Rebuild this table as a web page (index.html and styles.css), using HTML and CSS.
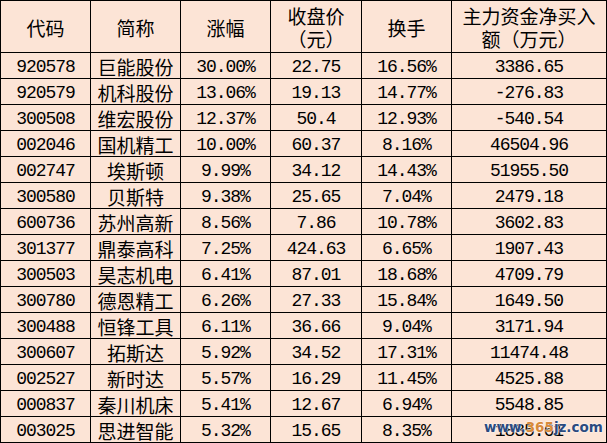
FILE: index.html
```html
<!DOCTYPE html>
<html lang="zh-CN">
<head>
<meta charset="utf-8">
<link rel="stylesheet" href="styles.css">
</head>
<body>
<div class="wrap">
<table class="grid">
<colgroup>
<col class="c1"><col class="c2"><col class="c3"><col class="c4"><col class="c5"><col class="c6">
</colgroup>
<thead>
<tr class="head">
<th>代码</th><th>简称</th><th>涨幅</th><th>收盘价<br>（元）</th><th>换手</th><th>主力资金净买入<br>额（万元）</th>
</tr>
</thead>
<tbody>
<tr><td class="n">920578</td><td>巨能股份</td><td class="n">30.00%</td><td class="n">22.75</td><td class="n">16.56%</td><td class="n">3386.65</td></tr>
<tr><td class="n">920579</td><td>机科股份</td><td class="n">13.06%</td><td class="n">19.13</td><td class="n">14.77%</td><td class="n">-276.83</td></tr>
<tr><td class="n">300508</td><td>维宏股份</td><td class="n">12.37%</td><td class="n">50.4</td><td class="n">12.93%</td><td class="n">-540.54</td></tr>
<tr><td class="n">002046</td><td>国机精工</td><td class="n">10.00%</td><td class="n">60.37</td><td class="n">8.16%</td><td class="n">46504.96</td></tr>
<tr><td class="n">002747</td><td>埃斯顿</td><td class="n">9.99%</td><td class="n">34.12</td><td class="n">14.43%</td><td class="n">51955.50</td></tr>
<tr><td class="n">300580</td><td>贝斯特</td><td class="n">9.38%</td><td class="n">25.65</td><td class="n">7.04%</td><td class="n">2479.18</td></tr>
<tr><td class="n">600736</td><td>苏州高新</td><td class="n">8.56%</td><td class="n">7.86</td><td class="n">10.78%</td><td class="n">3602.83</td></tr>
<tr><td class="n">301377</td><td>鼎泰高科</td><td class="n">7.25%</td><td class="n">424.63</td><td class="n">6.65%</td><td class="n">1907.43</td></tr>
<tr><td class="n">300503</td><td>昊志机电</td><td class="n">6.41%</td><td class="n">87.01</td><td class="n">18.68%</td><td class="n">4709.79</td></tr>
<tr><td class="n">300780</td><td>德恩精工</td><td class="n">6.26%</td><td class="n">27.33</td><td class="n">15.84%</td><td class="n">1649.50</td></tr>
<tr><td class="n">300488</td><td>恒锋工具</td><td class="n">6.11%</td><td class="n">36.66</td><td class="n">9.04%</td><td class="n">3171.94</td></tr>
<tr><td class="n">300607</td><td>拓斯达</td><td class="n">5.92%</td><td class="n">34.52</td><td class="n">17.31%</td><td class="n">11474.48</td></tr>
<tr><td class="n">002527</td><td>新时达</td><td class="n">5.57%</td><td class="n">16.29</td><td class="n">11.45%</td><td class="n">4525.88</td></tr>
<tr><td class="n">000837</td><td>秦川机床</td><td class="n">5.41%</td><td class="n">12.67</td><td class="n">6.94%</td><td class="n">5548.85</td></tr>
<tr><td class="n">003025</td><td>思进智能</td><td class="n">5.32%</td><td class="n">15.65</td><td class="n">8.35%</td><td class="n">1835.61</td></tr>
</tbody>
</table>
<div class="mark"><span class="m1">www.</span><span class="m2">365</span><span class="m1">jz.com</span></div>
</div>
</body>
</html>
```
FILE: styles.css
```css
html, body {
  margin: 0;
  padding: 0;
  background: #ffffff;
}
.wrap {
  position: relative;
  width: 607px;
  height: 443px;
}
.grid {
  border-collapse: collapse;
  table-layout: fixed;
  width: 606px;
  background: #fce4d6;
  font-family: "Noto Sans CJK SC", "Noto Sans", sans-serif;
  font-size: 19px;
  color: #000;
}
.c1 { width: 90px; }
.c2 { width: 90px; }
.c3 { width: 90px; }
.c4 { width: 91px; }
.c5 { width: 90px; }
.c6 { width: 155px; }
.grid th, .grid td {
  border: 1px solid #000;
  text-align: center;
  padding: 0;
  white-space: nowrap;
  overflow: hidden;
  vertical-align: middle;
}
.head { height: 52px; }
.grid tbody tr { height: 26px; }
.grid th {
  font-weight: normal;
  line-height: 23px;
  padding-top: 1px;
}
.grid td {
  line-height: 20px;
  padding-top: 3px;
}
.grid td.n {
  font-family: "Liberation Mono", "DejaVu Sans Mono", monospace;
  font-size: 18px;
  letter-spacing: -1.05px;
}
.mark {
  position: absolute;
  left: 484px;
  top: 418px;
  font-family: "DejaVu Sans", sans-serif;
  font-weight: bold;
  font-size: 13.5px;
  line-height: 18px;
  text-shadow: 0 0 2px #fff, 0 0 1px #fff;
}
.m1 { color: #2b4a7e; }
.m2 { color: #d8893a; }
```
